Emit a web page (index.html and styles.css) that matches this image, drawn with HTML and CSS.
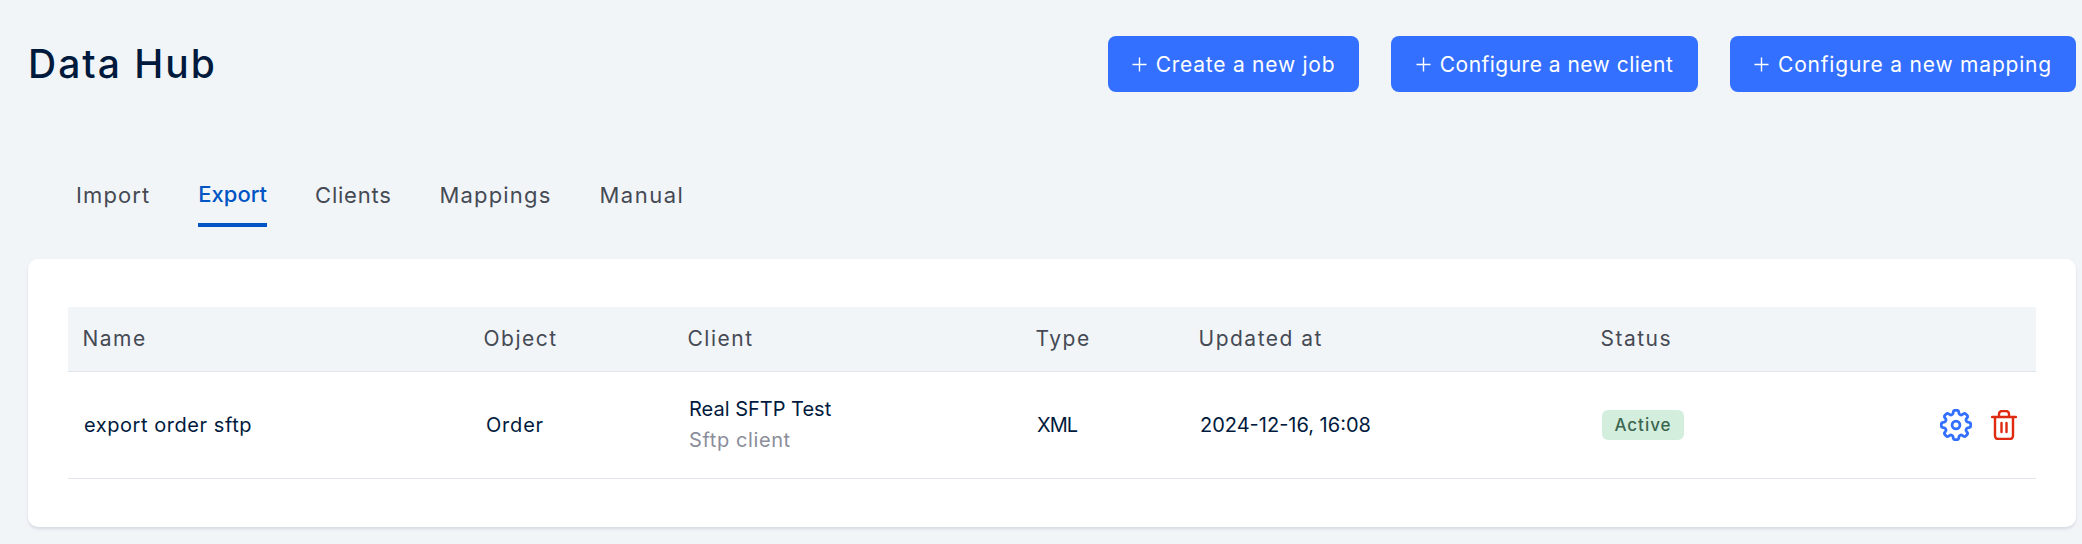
FILE: index.html
```html
<!DOCTYPE html>
<html lang="en">
<head>
<meta charset="utf-8">
<title>Data Hub</title>
<link rel="stylesheet" href="styles.css">
</head>
<body>
<div class="page">
  <header class="top">
    <h1 class="title">Data Hub</h1>
    <div class="actions">
      <button class="btn btn-job"><svg class="plus" viewBox="0 0 16 16"><path d="M8 .5v15M.5 8h15"/></svg><span>Create a new job</span></button>
      <button class="btn btn-client"><svg class="plus" viewBox="0 0 16 16"><path d="M8 .5v15M.5 8h15"/></svg><span>Configure a new client</span></button>
      <button class="btn btn-mapping"><svg class="plus" viewBox="0 0 16 16"><path d="M8 .5v15M.5 8h15"/></svg><span>Configure a new mapping</span></button>
    </div>
  </header>
  <nav class="tabs">
    <a class="tab tab-import">Import</a>
    <a class="tab tab-export active">Export</a>
    <a class="tab tab-clients">Clients</a>
    <a class="tab tab-mappings">Mappings</a>
    <a class="tab tab-manual">Manual</a>
  </nav>
  <section class="card">
    <table class="grid">
      <colgroup>
        <col class="c-name"><col class="c-object"><col class="c-client"><col class="c-type"><col class="c-updated"><col class="c-status"><col>
      </colgroup>
      <thead>
        <tr><th>Name</th><th>Object</th><th>Client</th><th>Type</th><th>Updated at</th><th>Status</th><th></th></tr>
      </thead>
      <tbody>
        <tr>
          <td class="t-name">export order sftp</td>
          <td class="t-object">Order</td>
          <td><div class="client-name">Real SFTP Test</div><div class="client-kind">Sftp client</div></td>
          <td class="t-type">XML</td>
          <td>2024-12-16, 16:08</td>
          <td><span class="badge">Active</span></td>
          <td>
            <div class="row-actions">
              <svg class="ico gear" viewBox="2.2 2.2 19.6 19.6"><path d="M10.343 3.94c.09-.542.56-.94 1.11-.94h1.093c.55 0 1.02.398 1.11.94l.149.894c.07.424.384.764.78.93.398.164.855.142 1.205-.108l.737-.527a1.125 1.125 0 011.45.12l.773.774c.39.389.44 1.002.12 1.45l-.527.737c-.25.35-.272.806-.107 1.204.165.397.505.71.93.78l.893.15c.543.09.94.56.94 1.109v1.094c0 .55-.397 1.02-.94 1.11l-.893.149c-.425.07-.765.383-.93.78-.165.398-.143.854.107 1.204l.527.738c.32.447.269 1.06-.12 1.45l-.774.773a1.125 1.125 0 01-1.449.12l-.738-.527c-.35-.25-.806-.272-1.203-.107-.397.165-.71.505-.781.929l-.149.894c-.09.542-.56.94-1.11.94h-1.094c-.55 0-1.019-.398-1.11-.94l-.148-.894c-.071-.424-.384-.764-.781-.93-.398-.164-.854-.142-1.204.108l-.738.527c-.447.32-1.06.269-1.45-.12l-.773-.774a1.125 1.125 0 01-.12-1.45l.527-.737c.25-.35.273-.806.108-1.204-.165-.397-.505-.71-.93-.78l-.894-.15c-.542-.09-.94-.56-.94-1.109v-1.094c0-.55.398-1.02.94-1.11l.894-.149c.424-.07.765-.383.93-.78.165-.398.143-.854-.107-1.204l-.527-.738a1.125 1.125 0 01.12-1.45l.773-.773a1.125 1.125 0 011.45-.12l.737.527c.35.25.807.272 1.204.107.397-.165.71-.505.78-.929l.15-.894z"/><circle cx="12" cy="12" r="2.4"/></svg>
              <svg class="ico trash" viewBox="0 0 26 30"><path d="M1 7h24M4 7v19a3 3 0 003 3h12a3 3 0 003-3V7M8 7V4a3 3 0 013-3h4a3 3 0 013 3v3M10.5 13v9M15.5 13v9"/></svg>
            </div>
          </td>
        </tr>
      </tbody>
    </table>
  </section>
</div>
</body>
</html>
```
FILE: styles.css
```css
* { box-sizing: border-box; }
html, body { margin: 0; padding: 0; }
body {
  width: 2082px;
  height: 544px;
  overflow: hidden;
  background: #f2f5f8;
  font-family: Inter, "Noto Sans", sans-serif;
  color: #001a3d;
}
.page { padding: 36px 6px 0 28px; }
.top { display: flex; justify-content: space-between; align-items: center; height: 56px; }
.title { margin: 0; font-size: 39px; font-weight: 500; letter-spacing: 2px; line-height: 56px; }
.actions { display: flex; gap: 32px; }
.btn {
  display: flex; align-items: center; justify-content: center; gap: 9px;
  height: 56px; border: 0; border-radius: 8px;
  background: #3370ff; color: #fff;
  font-family: inherit; font-size: 21px; font-weight: 400;
  padding: 0;
}
.btn-job { width: 251px; letter-spacing: 0.75px; }
.btn-client { width: 307px; letter-spacing: 0.48px; }
.btn-mapping { width: 346px; letter-spacing: 0.8px; }
.plus { width: 15px; height: 15px; fill: none; stroke: #fff; stroke-width: 1.5; flex: none; }
.tabs { display: flex; gap: 48px; margin: 81px 0 0 48px; }
.tab { font-size: 22px; color: #454a54; line-height: 34px; height: 54px; padding-top: 5px; border-bottom: 4px solid transparent; }
.tab.active { color: #0055c4; font-weight: 500; border-bottom-color: #0055c4; padding-top: 4px; }
.tab-import { letter-spacing: 1.1px; }
.tab-export { letter-spacing: 0; }
.tab-clients { letter-spacing: 0.76px; }
.tab-mappings { letter-spacing: 1.16px; }
.tab-manual { letter-spacing: 1.5px; }
.card {
  margin-top: 32px; height: 268px; padding: 48px 40px 0;
  background: #fff; border-radius: 10px;
  box-shadow: 0 2px 3px rgba(20, 40, 80, 0.12);
}
.grid { width: 100%; border-collapse: collapse; table-layout: fixed; }
.c-name { width: 401px; }
.c-object { width: 204px; }
.c-client { width: 348px; }
.c-type { width: 163px; }
.c-updated { width: 402px; }
.c-status { width: 300px; }
th {
  height: 64px; padding: 0 0 0 14.5px; text-align: left;
  background: #f2f5f8; border-bottom: 1.5px solid #e2e5ee;
  font-size: 21px; font-weight: 400; color: #454a54; letter-spacing: 1.5px;
}
td {
  height: 107px; padding: 0 0 0 16px;
  border-bottom: 1.5px solid #e2e5ee;
  font-size: 20px; color: #001a3d;
}
.t-name { letter-spacing: 0.55px; }
.t-object { letter-spacing: 0.8px; padding-left: 17px; }
.t-type { letter-spacing: -1px; }
.client-name { line-height: 31px; }
.client-kind { line-height: 31px; color: #8a8d9a; letter-spacing: 0.6px; }
.badge {
  display: inline-block; height: 30px; width: 82px; line-height: 30px; text-align: center;
  background: #d4eede; border-radius: 6px;
  color: #3b6650; font-size: 17px; font-weight: 500; letter-spacing: 1px;
}
.row-actions { display: flex; justify-content: flex-end; align-items: center; gap: 19px; padding-right: 19px; }
.ico { fill: none; stroke-linecap: round; stroke-linejoin: round; }
.gear { width: 32px; height: 32px; stroke: #3370ff; stroke-width: 1.7; }
.trash { width: 26px; height: 30px; stroke: #de2a10; stroke-width: 2.4; }
```
